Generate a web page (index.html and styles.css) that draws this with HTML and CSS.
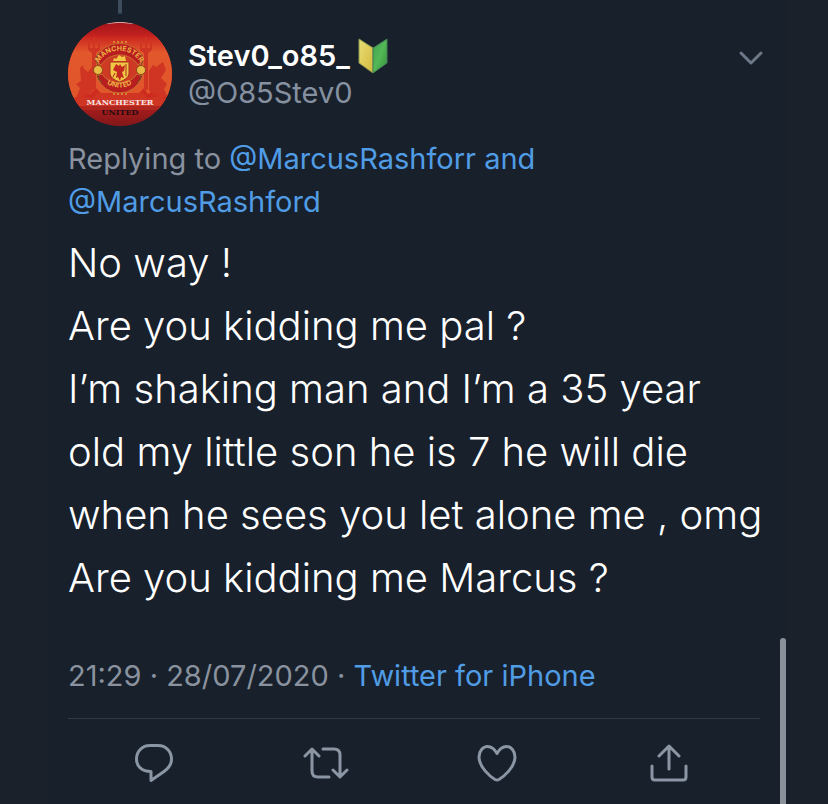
FILE: index.html
```html
<!DOCTYPE html>
<html lang="en">
<head>
    <meta charset="UTF-8">
    <meta name="viewport" content="width=device-width, initial-scale=1.0">
    <title>Tweet</title>
    <link rel="stylesheet" href="styles.css">
</head>
<body>
    <main class="column">
        <article class="tweet">
            <div class="thread-line"></div>
            <header class="header">
                <svg class="avatar" viewBox="0 0 104 104" role="img" aria-label="Manchester United">
                    <defs>
                        <clipPath id="round"><circle cx="52" cy="52" r="52"/></clipPath>
                        <linearGradient id="red" x1="0" y1="0" x2="0" y2="1">
                            <stop offset="0" stop-color="#a5141c"/>
                            <stop offset=".16" stop-color="#c9241f"/>
                            <stop offset=".7" stop-color="#cf2c20"/>
                            <stop offset=".85" stop-color="#b51f1e"/>
                            <stop offset="1" stop-color="#751719"/>
                        </linearGradient>
                        <linearGradient id="orange" x1="0" y1="0" x2="0" y2="1">
                            <stop offset="0" stop-color="#c9241f"/>
                            <stop offset=".25" stop-color="#e2572b"/>
                            <stop offset="1" stop-color="#e0562a"/>
                        </linearGradient>
                        <path id="arc-top" d="M30 42A24 24 0 0 1 73 42"/>
                        <path id="arc-bottom" d="M34 58A24 24 0 0 0 69 58"/>
                    </defs>
                    <g clip-path="url(#round)">
                        <rect width="104" height="104" fill="url(#red)"/>
                        <path d="M0 14H104V76L92 74L86 68L80 72L76 66L70 72H34L28 66L22 72L16 68L12 74L0 78Z" fill="url(#orange)"/>
                        <!-- devil and trident shadows behind the crest -->
                        <g fill="#d03423">
                            <path d="M20 17h2v9h3V16h2v10h3V17h2v11l-4 3v37h-4V31l-4-3z"/>
                            <path d="M72 17h2v9h3V16h2v10h3V17h2v11l-4 3v37h-4V31l-4-3z"/>
                            <path d="M12 46l3-3 1 4 4 3 4-5v25l-8 4-8 2 4-10-4-4 5-3z"/>
                            <path d="M95 40l-7 5-3-2-4 6v20l8 4 11 3-4-9 3-5-6-6 5-8z"/>
                            <path d="M0 80l14-6 10 2 6-5h44l6 5 12-2 12 6v8H0z"/>
                        </g>
                        <path d="M38 1.500Q52-1 66 1.500" stroke="#d9c5c2" fill="none"/>
                        <g fill="#8d181a" opacity=".5">
                            <path d="M8 84h88v20H8z"/>
                            <path d="M32 90h3v14h-3zM45 92h3v12h-3zM61 91h3v13h-3zM77 89h3v15h-3z"/>
                        </g>
                        <circle cx="51.500" cy="46" r="21" fill="#cf3a24"/>
                        <path d="M27 37A27 27 0 0 1 76 37L70 43A22 22 0 0 0 33 43Z" fill="#b81d20" stroke="#c98232" stroke-width=".8"/>
                        <path d="M28 54Q36 71 51.500 71Q67 71 75 54L69 52Q63 61 51.500 61Q40 61 34 52Z" fill="#b81d20" stroke="#c98232" stroke-width=".8"/>
                        <g fill="#e9bb45" stroke="#8c4c1c">
                            <circle cx="30" cy="48" r="4.500"/>
                            <circle cx="73" cy="48" r="4.500"/>
                        </g>
                        <g fill="none" stroke="#6d5428">
                            <path d="M30 43q-5-8 2-12M73 43q5-8-2-12M30 53q0 5 4 8M73 53q0 5-4 8"/>
                        </g>
                        <path d="M42 40H61V52Q60 57 51.500 60Q43 57 42 52Z" fill="#f1c644" stroke="#a8301c"/>
                        <path d="M45 39l1-3 2 1 3-4 3 2 3-1 1 5z" fill="#f1c644"/>
                        <path d="M48 42l3 2 1-2 2 3 3-2-1 6-2 1 2 6-3-1-1 4-2-4-2 1 1-6-4-2z" fill="#c5281f"/>
                        <path d="M58 42v12M47 51l-2 4" stroke="#a62a1d" fill="none"/>
                        <path d="M45 20h14M45 72h14" stroke="#d99b38" stroke-width="1.500" stroke-dasharray="2 2"/>
                        <text class="crest-text"><textPath href="#arc-top" startOffset="50%">MANCHESTER</textPath></text>
                        <text class="crest-text"><textPath href="#arc-bottom" startOffset="50%">UNITED</textPath></text>
                        <text class="club club-light" x="52" y="83">MANCHESTER</text>
                        <text class="club" x="52" y="93">UNITED</text>
                    </g>
                </svg>
                <div class="names">
                    <div class="name">
                        <span>Stev0_o85_</span>
                        <svg class="badge" viewBox="0 0 30 36" aria-hidden="true">
                            <defs>
                                <linearGradient id="leaf-left" x1="0" y1="0" x2="1" y2="1">
                                    <stop offset="0" stop-color="#e9df76"/>
                                    <stop offset="1" stop-color="#d3b93c"/>
                                </linearGradient>
                                <linearGradient id="leaf-right" x1="0" y1="0" x2="1" y2="1">
                                    <stop offset="0" stop-color="#3fa052"/>
                                    <stop offset=".5" stop-color="#53b856"/>
                                    <stop offset="1" stop-color="#348d3b"/>
                                </linearGradient>
                            </defs>
                            <path d="M1 1L15 10V35L1 25Z" fill="url(#leaf-left)" stroke="#8c9a54"/>
                            <path d="M29 1L15 10V35L29 25Z" fill="url(#leaf-right)" stroke="#447f55"/>
                        </svg>
                    </div>
                    <div class="handle">@O85Stev0</div>
                </div>
                <button class="more" aria-label="More">
                    <svg viewBox="0 0 24 14"><path d="M2 2L12 12L22 2"/></svg>
                </button>
            </header>
            <p class="replying">Replying to <a href="#">@MarcusRashforr and</a> <a href="#">@MarcusRashford</a></p>
            <p class="text">No way !<br>Are you kidding me pal ?<br>I’m shaking man and I’m a 35 year<br>old my little son he is 7 he will die<br>when he sees you let alone me , omg<br>Are you kidding me Marcus ?</p>
            <p class="meta">21:29 · 28/07/2020 · <a href="#">Twitter for iPhone</a></p>
            <footer class="actions">
                <button aria-label="Reply">
                    <svg viewBox="0 0 44 40"><path d="M18 2.500H26C34 2.500 39.500 8.500 39.500 16C39.500 21 37 25 32 28.500L19 37.500V28.500C9.500 28.500 4.500 23 4.500 16C4.500 8.500 10 2.500 18 2.500Z"/></svg>
                </button>
                <button aria-label="Retweet">
                    <svg viewBox="0 0 44 40"><path d="M1 13L8 6L15 13M8 6V28Q8 34 14 34H25M29 27L36 34L43 27M36 34V12Q36 6 30 6H19"/></svg>
                </button>
                <button aria-label="Like">
                    <svg viewBox="0 0 44 40"><path d="M22 10.500C19 5 15.500 3.500 12.500 3.500C8 3.500 4 8 4 14C4 24 15 33.500 20 36.500Q22 37.500 24 36.500C29 33.500 40 24 40 14C40 8 36 3.500 31.500 3.500C28.500 3.500 25 5 22 10.500Z"/></svg>
                </button>
                <button aria-label="Share">
                    <svg viewBox="0 0 44 40"><path d="M12 13L22 3L32 13M22 3V26M5 23V34Q5 37 8 37H36Q39 37 39 34V23"/></svg>
                </button>
            </footer>
        </article>
        <div class="scrollbar"></div>
    </main>
</body>
</html>
```
FILE: styles.css
```css
* {
    box-sizing: border-box;
}
body {
    margin: 0;
    padding: 0 42px 0 47px;
    background: #1a212b;
    color: #fff;
    font-family: Inter, "Noto Sans", sans-serif;
}
.column {
    position: relative;
    min-height: 100vh;
    background: #18202b;
}
.tweet {
    padding: 22px 26px 0 21px;
}
p {
    margin: 0;
}
a {
    color: #509ce5;
    text-decoration: none;
}
button {
    padding: 0;
    border: none;
    background: none;
    cursor: pointer;
}
button svg {
    display: block;
    overflow: visible;
    fill: none;
    stroke: #8b96a4;
    stroke-width: 3;
    stroke-linecap: round;
    stroke-linejoin: round;
}
.thread-line {
    position: absolute;
    top: 0;
    left: 71px;
    width: 4px;
    height: 14px;
    border-radius: 0 0 2px 2px;
    background: #3d4d5d;
}
.header {
    display: flex;
    align-items: center;
    gap: 16px;
}
.avatar {
    flex: none;
    width: 104px;
    height: 104px;
}
.crest-text {
    fill: #f0b044;
    font-size: 7px;
    font-weight: 700;
    text-anchor: middle;
}
.club {
    fill: #240d12;
    font-family: "DejaVu Serif", serif;
    font-size: 8px;
    font-weight: 700;
    text-anchor: middle;
}
.club-light {
    fill: #f4e4e4;
}
.names {
    flex: 1;
    line-height: 37px;
}
.name {
    display: flex;
    align-items: center;
    gap: 8px;
    font-size: 29px;
    font-weight: 600;
}
.badge {
    width: 30px;
    height: 36px;
}
.handle {
    color: #8590a0;
    font-size: 29px;
}
.more {
    align-self: flex-start;
    padding-top: 29px;
    margin-right: -3px;
}
.more svg {
    width: 24px;
    height: 14px;
    stroke: #6c7887;
}
.replying,
.meta {
    color: #89929e;
    font-size: 29px;
    line-height: 43px;
}
.replying {
    margin-top: 11px;
}
.text {
    margin-top: 8px;
    margin-right: -12px;
    font-size: 40px;
    font-weight: 300;
    line-height: 63px;
}
.meta {
    margin-top: 45px;
}
.actions {
    display: grid;
    grid-template-columns: repeat(4, 1fr);
    justify-items: center;
    margin-top: 21px;
    padding: 24px 5px 0 0;
    border-top: 1px solid #303945;
}
.actions svg {
    width: 44px;
    height: 40px;
}
.scrollbar {
    position: absolute;
    right: 0;
    bottom: 0;
    width: 6px;
    height: 166px;
    border-radius: 3px 3px 0 0;
    background: #8b9199;
}
```
